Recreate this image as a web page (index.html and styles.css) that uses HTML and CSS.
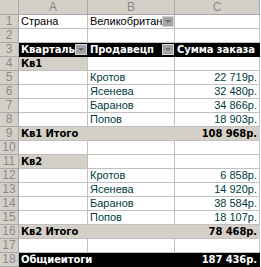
FILE: index.html
```html
<!DOCTYPE html>
<html lang="ru">
<head>
<meta charset="utf-8">
<title>Сводная таблица</title>
<link rel="stylesheet" href="styles.css">
</head>
<body>
<div class="sheet">
  <!-- column headers -->
  <div class="h corner"></div>
  <div class="h col">A</div>
  <div class="h col">B</div>
  <div class="h col">C</div>

  <!-- 1 -->
  <div class="h row">1</div>
  <div class="c">Страна</div>
  <div class="c has-btn">Великобритания<span class="drop"></span></div>
  <div class="c"></div>

  <!-- 2 -->
  <div class="h row">2</div>
  <div class="c"></div><div class="c"></div><div class="c"></div>

  <!-- 3 -->
  <div class="h row">3</div>
  <div class="c dark b has-btn">Кварталы<span class="drop"></span></div>
  <div class="c dark b has-btn">Продавецп<span class="drop"></span></div>
  <div class="c dark b">Сумма заказа</div>

  <!-- 4 -->
  <div class="h row">4</div>
  <div class="c grey b">Кв1</div>
  <div class="c"></div><div class="c"></div>

  <div class="h row">5</div>
  <div class="c"></div><div class="c v">Кротов</div><div class="c v num">22 719р.</div>
  <div class="h row">6</div>
  <div class="c"></div><div class="c v">Ясенева</div><div class="c v num">32 480р.</div>
  <div class="h row">7</div>
  <div class="c"></div><div class="c v">Баранов</div><div class="c v num">34 866р.</div>
  <div class="h row">8</div>
  <div class="c"></div><div class="c v">Попов</div><div class="c v num">18 903р.</div>

  <!-- 9 -->
  <div class="h row">9</div>
  <div class="c band grey b"><span>Кв1 Итого</span><span>108 968р.</span></div>

  <div class="h row">10</div>
  <div class="c"></div><div class="c"></div><div class="c"></div>

  <!-- 11 -->
  <div class="h row">11</div>
  <div class="c grey b">Кв2</div>
  <div class="c"></div><div class="c"></div>

  <div class="h row">12</div>
  <div class="c"></div><div class="c v">Кротов</div><div class="c v num">6 858р.</div>
  <div class="h row">13</div>
  <div class="c"></div><div class="c v">Ясенева</div><div class="c v num">14 920р.</div>
  <div class="h row">14</div>
  <div class="c"></div><div class="c v">Баранов</div><div class="c v num">38 584р.</div>
  <div class="h row">15</div>
  <div class="c"></div><div class="c v">Попов</div><div class="c v num">18 107р.</div>

  <!-- 16 -->
  <div class="h row">16</div>
  <div class="c band grey b"><span>Кв2 Итого</span><span>78 468р.</span></div>

  <div class="h row">17</div>
  <div class="c"></div><div class="c"></div><div class="c"></div>

  <!-- 18 -->
  <div class="h row">18</div>
  <div class="c band dark b"><span>Общиеитоги</span><span>187 436р.</span></div>
</div>
</body>
</html>
```

FILE: styles.css
```css
html, body {
  margin: 0;
  padding: 0;
  background: #ffffff;
}

.sheet {
  display: grid;
  grid-template-columns: 19px 69px 87px 85px;
  grid-template-rows: 15px repeat(18, 14px);
  font-family: "Liberation Sans", Arial, sans-serif;
  font-size: 11px;
  line-height: 13px;
  color: #000000;
}

.h,
.c {
  box-sizing: border-box;
  border-right: 1px solid #c0c0c0;
  border-bottom: 1px solid #c0c0c0;
  white-space: nowrap;
  overflow: hidden;
}

/* headers */
.h {
  background: #d4d0c8;
  color: #8a8a8a;
  border-color: #a8a8a8;
  text-align: center;
  font-size: 12px;
}
.h.col { line-height: 14px; }
.h.row { line-height: 13px; }

/* cells */
.c {
  padding: 0 2px;
  position: relative;
}
.v { color: #003c3c; }
.num { text-align: right; }

.b {
  font-family: "DejaVu Sans", Verdana, sans-serif;
  font-weight: bold;
  font-size: 10px;
  letter-spacing: -0.1px;
}

.grey {
  background: #d4d0c8;
}
.dark {
  background: #000000;
  color: #ffffff;
  border-color: #000000;
}

.band {
  grid-column: 2 / 5;
  display: flex;
  justify-content: space-between;
}
.band.grey { border-right-color: #d4d0c8; }

/* filter dropdown buttons */
.drop {
  position: absolute;
  right: 0;
  top: 1px;
  width: 12px;
  height: 11px;
  box-sizing: border-box;
  background: #a4a4a4;
  border: 1px solid #d4d4d4;
}
.drop::after {
  content: "";
  position: absolute;
  left: 2px;
  top: 3px;
  border-left: 3px solid transparent;
  border-right: 3px solid transparent;
  border-top: 3px solid #6c6c6c;
}
```
